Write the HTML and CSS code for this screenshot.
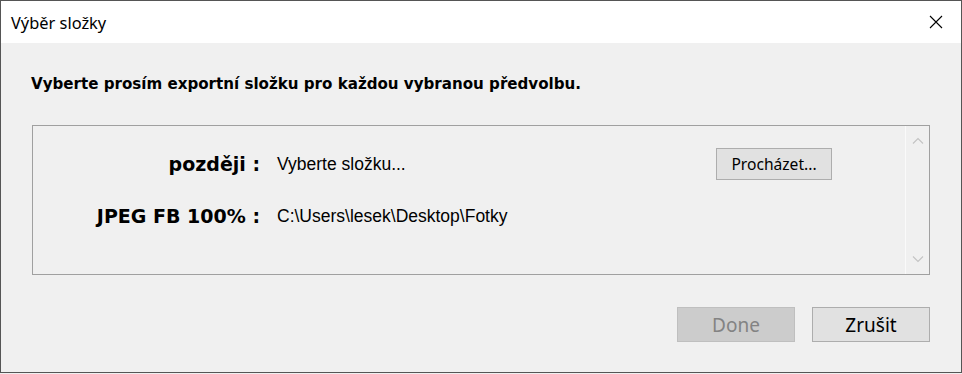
FILE: index.html
```html
<!DOCTYPE html>
<html lang="cs">
<head>
    <meta charset="UTF-8">
    <meta name="viewport" content="width=device-width, initial-scale=1.0">
    <title>Výběr složky</title>
    <link rel="stylesheet" href="styles.css">
</head>
<body>
    <div class="okno">
        <div class="titulek">
            <span class="titulek-text">Výběr složky</span>
            <svg class="zavrit" width="14" height="14" viewBox="0 0 14 14">
                <path d="M1 1 L13 13 M13 1 L1 13" stroke="#000" stroke-width="1.1" fill="none"/>
            </svg>
        </div>

        <div class="obsah">
            <p class="nadpis">Vyberte prosím exportní složku pro každou vybranou předvolbu.</p>

            <div class="panel">
                <div class="radky">
                    <div class="popis">později :</div>
                    <div class="hodnota">Vyberte složku...</div>
                    <div><button class="tlacitko prochazet">Procházet...</button></div>

                    <div class="popis">JPEG FB 100% :</div>
                    <div class="hodnota">C:\Users\lesek\Desktop\Fotky</div>
                    <div></div>
                </div>
                <div class="posuvnik">
                    <svg width="12" height="8" viewBox="0 0 12 8">
                        <path d="M1 6.5 L6 1.5 L11 6.5" stroke="#c4c4c4" stroke-width="1.2" fill="none"/>
                    </svg>
                    <svg width="12" height="8" viewBox="0 0 12 8">
                        <path d="M1 1.5 L6 6.5 L11 1.5" stroke="#c4c4c4" stroke-width="1.2" fill="none"/>
                    </svg>
                </div>
            </div>

            <div class="paticka">
                <button class="tlacitko velke" disabled>Done</button>
                <button class="tlacitko velke">Zrušit</button>
            </div>
        </div>
    </div>
</body>
</html>
```

FILE: styles.css
```css
body {
    margin: 0;
    padding: 0;
    background-color: #f0f0f0;
    font-family: "Noto Sans", "Open Sans", sans-serif;
}
.okno {
    width: 960px;
    height: 371px;
    border: 1px solid #555;
    background-color: #f0f0f0;
    display: flex;
    flex-direction: column;
}
.titulek {
    height: 42px;
    background-color: #fff;
    display: flex;
    align-items: center;
    justify-content: space-between;
    padding: 0 18px 0 10px;
}
.titulek-text {
    font-size: 16.4px;
    color: #000;
}
.obsah {
    padding: 32px 31px 0 30px;
}
.nadpis {
    margin: 0;
    font-family: "DejaVu Sans", Verdana, sans-serif;
    font-weight: bold;
    font-size: 15.1px;
    line-height: 18px;
    color: #000;
}
.panel {
    margin: 32px 0 0 1px;
    height: 148px;
    border: 1px solid #a0a0a0;
    display: flex;
}
.radky {
    flex: 1;
    display: grid;
    grid-template-columns: 244px 439px 116px;
    grid-template-rows: 32px 32px;
    row-gap: 20px;
    padding-top: 22px;
    align-items: center;
}
.popis {
    font-family: "DejaVu Sans", Verdana, sans-serif;
    font-weight: bold;
    font-size: 19px;
    text-align: right;
    padding-right: 17px;
}
.hodnota {
    font-family: "Liberation Sans", Arial, sans-serif;
    font-size: 17.5px;
}
.posuvnik {
    width: 23px;
    border-left: 1px solid #fafafa;
    display: flex;
    flex-direction: column;
    justify-content: space-between;
    align-items: center;
    padding: 11px 0 11px 0;
}
.tlacitko {
    font-family: "Noto Sans", sans-serif;
    background-color: #e1e1e1;
    border: 1px solid #adadad;
    color: #000;
    padding: 0;
    margin: 0;
}
.prochazet {
    width: 116px;
    height: 32px;
    font-size: 15.6px;
}
.paticka {
    display: flex;
    justify-content: flex-end;
    gap: 17px;
    margin-top: 32px;
}
.velke {
    width: 118px;
    height: 35px;
    font-size: 19px;
}
.velke:disabled {
    background-color: #cccccc;
    border-color: #bfbfbf;
    color: #838383;
}
```
